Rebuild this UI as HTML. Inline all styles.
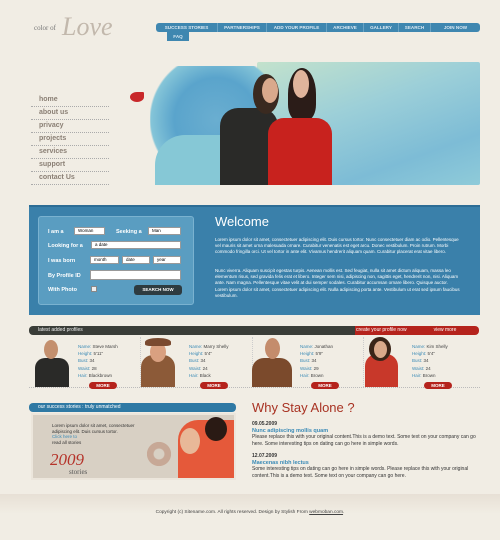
<!DOCTYPE html>
<html><head><meta charset="utf-8"><style>
*{margin:0;padding:0;box-sizing:border-box}
body{width:500px;height:540px;background:#f1ede4;font-family:"Liberation Sans",sans-serif;position:relative;overflow:hidden}
.a{position:absolute}
.nav{left:156px;top:23px;width:324px;height:9px;background:#3f87b0;border-radius:3px;color:#dbe9f2;font-size:4.6px;font-weight:bold;line-height:9px;display:flex;white-space:nowrap}
.nav span{border-right:1px solid #6aa3c4;text-align:center}
.menu div{height:13px;border-bottom:1px dotted #aaa;color:#8a7f74;font-size:7px;font-weight:bold;padding-left:8px;line-height:11px;width:78px}
.lbl{color:#fff;font-size:5.5px;font-weight:bold}
.sel{background:#fff;border:1px solid #999;height:8px;font-size:4.5px;padding-left:3px;line-height:6px;position:absolute}
.pr{font-size:4.5px;color:#444;line-height:7.2px}
.pr b{color:#3a8ab6;font-weight:normal}
.more{background:#b5231c;color:#fff;font-size:4.5px;font-weight:bold;width:28px;height:7px;border-radius:4px;text-align:center;line-height:7px}
.txt{font-size:4.5px;color:#fff;line-height:6.2px}
</style></head><body>
<div class="a" style="left:34px;top:24px;font-size:7px;color:#777;font-family:'Liberation Serif',serif">color of</div>
<div class="a" style="left:62px;top:12px;font-size:26px;color:#c2b8ac;font-family:'Liberation Serif',serif;font-style:italic">Love</div>
<div class="a nav"><span style="width:62px">SUCCESS STORIES</span><span style="width:49px">PARTNERSHIPS</span><span style="width:60px">ADD YOUR PROFILE</span><span style="width:37px">ARCHIEVE</span><span style="width:35px">GALLERY</span><span style="width:32px">SEARCH</span><span style="border:0;width:49px">JOIN NOW</span></div>
<div class="a" style="left:167px;top:32px;width:22px;height:9px;background:#3f87b0;color:#dbe9f2;font-size:4.6px;font-weight:bold;line-height:9px;text-align:center">FAQ</div>
<div class="a menu" style="left:31px;top:94px">
<div>home</div><div>about us</div><div>privacy</div><div>projects</div><div>services</div><div>support</div><div>contact Us</div></div>
<!-- hero -->
<div class="a" style="left:257px;top:62px;width:223px;height:123px;background:linear-gradient(160deg,#c3e2cc 0%,#9ccfd8 40%,#7dbcd6 75%,#8fcbd9 100%);border-radius:2px"></div>
<div class="a" style="left:150px;top:66px;width:120px;height:119px;background:radial-gradient(circle at 55% 45%,#6aaed0 0%,#5aa4cc 45%,#85c5d8 70%,rgba(140,200,215,0) 72%)"></div>
<div class="a" style="left:155px;top:135px;width:110px;height:50px;background:#86c8d6;border-radius:30px 0 0 0"></div>
<div class="a" style="left:130px;top:92px;width:14px;height:10px;background:#c8282a;border-radius:50% 10% 50% 50%"></div>
<div class="a" style="left:220px;top:108px;width:58px;height:77px;background:#2a2a28;border-radius:18px 18px 0 0"></div>
<div class="a" style="left:253px;top:74px;width:26px;height:40px;background:#3a2a20;border-radius:50%"></div>
<div class="a" style="left:262px;top:78px;width:16px;height:25px;background:#d9a98c;border-radius:50%"></div>
<div class="a" style="left:288px;top:68px;width:28px;height:52px;background:#2b1c18;border-radius:50% 50% 30% 30%"></div>
<div class="a" style="left:293px;top:70px;width:16px;height:28px;background:#e0b49c;border-radius:50%"></div>
<div class="a" style="left:268px;top:118px;width:64px;height:67px;background:#c8221e;border-radius:16px 16px 0 0"></div>
<!-- search band -->
<div class="a" style="left:29px;top:205px;width:451px;height:110px;background:#3a80aa;border-top:2px solid #2d6d95"></div>
<div class="a" style="left:38px;top:216px;width:156px;height:89px;background:#5a9dc1;border:1px solid #7ab2d0;border-radius:3px"></div>
<div class="a lbl" style="left:48px;top:229px">I am a</div>
<div class="sel" style="left:74px;top:227px;width:31px">Woman</div>
<div class="a lbl" style="left:116px;top:229px">Seeking a</div>
<div class="sel" style="left:148px;top:227px;width:33px">Man</div>
<div class="a lbl" style="left:48px;top:243px">Looking for a</div>
<div class="sel" style="left:91px;top:241px;width:90px">a date</div>
<div class="a lbl" style="left:48px;top:258px">I was born</div>
<div class="sel" style="left:90px;top:256px;width:29px">month</div>
<div class="sel" style="left:122px;top:256px;width:28px">date</div>
<div class="sel" style="left:153px;top:256px;width:28px">year</div>
<div class="a lbl" style="left:48px;top:273px">By Profile ID</div>
<div class="sel" style="left:90px;top:270px;width:91px;height:10px"></div>
<div class="a lbl" style="left:48px;top:287px">With Photo</div>
<div class="a" style="left:91px;top:286px;width:6px;height:6px;background:#eee;border:1px solid #888"></div>
<div class="a" style="left:134px;top:285px;width:48px;height:10px;background:#2e3b40;border-radius:3px;color:#fff;font-size:4.5px;font-weight:bold;line-height:10px;text-align:center">SEARCH NOW</div>
<div class="a" style="left:215px;top:214px;color:#fff;font-size:13px">Welcome</div>
<div class="a txt" style="left:215px;top:237px;width:245px">Lorem ipsum dolor sit amet, consectetuer adipiscing elit. Duis cursus tortor. Nunc consectetuer diam ac odio. Pellentesque vel mauris sit amet urna malesuada ornare. Curabitur venenatis est eget arcu. Donec vestibulum. Proin rutrum. Morbi commodo fringilla orci. Ut vel tortor in ante elit. Vivamus hendrerit aliquam quam. Curabitur placerat erat vitae libero.</div>
<div class="a txt" style="left:215px;top:268px;width:245px">Nunc viverra. Aliquam suscipit egestas turpis. Aenean mollis est. Sed feugiat, nulla sit amet dictum aliquam, massa leo elementum risus, sed gravida felis erat et libero. Integer sem nisi, adipiscing non, sagittis eget, hendrerit non, nisi. Aliquam ante. Nam magna. Pellentesque vitae velit at dui semper sodales. Curabitur accumsan ornare libero. Quisque auctor. Lorem ipsum dolor sit amet, consectetuer adipiscing elit. Nulla adipiscing porta ante. Vestibulum ut erat sed ipsum faucibus vestibulum.</div>
<!-- profiles -->
<div class="a" style="left:29px;top:326px;width:326px;height:9px;background:#3a3d38;border-radius:4px 0 0 4px;color:#eee;font-size:5px;line-height:9px;padding-left:9px">latest added profiles</div>
<div class="a" style="left:355px;top:326px;width:124px;height:9px;background:#b5231c;border-radius:0 4px 4px 0;color:#fff;font-size:5px;line-height:9px;padding-left:1px">create your profile now<span style="margin-left:27px">view more</span></div>
<div class="a" style="left:29px;top:387px;width:451px;border-top:1px dotted #bbb"></div>
<div class="a" style="left:140px;top:337px;height:50px;border-left:1px dotted #ccc"></div>
<div class="a" style="left:252px;top:337px;height:50px;border-left:1px dotted #ccc"></div>
<div class="a" style="left:363px;top:337px;height:50px;border-left:1px dotted #ccc"></div>
<div class="a" style="left:35px;top:358px;width:34px;height:29px;background:#2a2a28;border-radius:10px 10px 0 0"></div><div class="a" style="left:44px;top:340px;width:14px;height:19px;background:#c4906e;border-radius:50%"></div>
<div class="a" style="left:141px;top:355px;width:34px;height:32px;background:#8c5a38;border-radius:12px 12px 0 0"></div><div class="a" style="left:150px;top:342px;width:16px;height:20px;background:#d9a080;border-radius:50%"></div><div class="a" style="left:145px;top:338px;width:26px;height:8px;background:#7a4a30;border-radius:50% 50% 20% 20%"></div>
<div class="a" style="left:252px;top:358px;width:40px;height:29px;background:#7b4a2c;border-radius:12px 12px 0 0"></div><div class="a" style="left:265px;top:338px;width:15px;height:21px;background:#c48c6c;border-radius:50%"></div>
<div class="a" style="left:365px;top:354px;width:33px;height:33px;background:#c8382a;border-radius:12px 12px 0 0"></div><div class="a" style="left:369px;top:337px;width:22px;height:24px;background:#3a2418;border-radius:50%"></div><div class="a" style="left:374px;top:341px;width:13px;height:17px;background:#d9a88a;border-radius:50%"></div>
<div class="a pr" style="left:78px;top:343px"><b>Name:</b> Steve Marsh<br><b>Height:</b> 5'11"<br><b>Bust:</b> 34<br><b>Waist:</b> 28<br><b>Hair:</b> Blackbrown</div>
<div class="a pr" style="left:189px;top:343px"><b>Name:</b> Marry Shelly<br><b>Height:</b> 5'4"<br><b>Bust:</b> 34<br><b>Waist:</b> 24<br><b>Hair:</b> Black</div>
<div class="a pr" style="left:300px;top:343px"><b>Name:</b> Jonathan<br><b>Height:</b> 5'9"<br><b>Bust:</b> 34<br><b>Waist:</b> 29<br><b>Hair:</b> Brown</div>
<div class="a pr" style="left:412px;top:343px"><b>Name:</b> Kim Shelly<br><b>Height:</b> 5'4"<br><b>Bust:</b> 34<br><b>Waist:</b> 24<br><b>Hair:</b> Brown</div>
<div class="a more" style="left:89px;top:382px">MORE</div>
<div class="a more" style="left:200px;top:382px">MORE</div>
<div class="a more" style="left:311px;top:382px">MORE</div>
<div class="a more" style="left:424px;top:382px">MORE</div>
<!-- success -->
<div class="a" style="left:29px;top:403px;width:207px;height:9px;background:#2f79a4;border-radius:4px;color:#fff;font-size:5px;line-height:9px;padding-left:9px">our success stories : truly unmatched</div>
<div class="a" style="left:31px;top:413px;width:205px;height:67px;background:#d8d0c4;border:2px solid #ece6dc"></div>
<div class="a" style="left:178px;top:420px;width:56px;height:58px;background:#e5593a;border-radius:20px 0 0 0"></div>
<div class="a" style="left:180px;top:428px;width:20px;height:26px;background:#e8b898;border-radius:50%"></div>
<div class="a" style="left:205px;top:417px;width:22px;height:24px;background:#2a1a14;border-radius:50%"></div>
<div class="a" style="left:145px;top:440px;width:28px;height:28px;border-radius:50%;background:radial-gradient(circle,#d8d0c4 25%,#c7a896 30%,#c7a896 60%,rgba(0,0,0,0) 62%)"></div>
<div class="a" style="left:52px;top:423px;font-size:4.5px;color:#333;line-height:5.5px">Lorem ipsum dolor sit amet, consectetuer<br>adipiscing elit. Duis cursus tortor.<br><span style="color:#3a8ab6">Click here to</span><br>read all stories</div>
<div class="a" style="left:50px;top:450px;font-size:17px;color:#b5332a;font-family:'Liberation Serif',serif;font-style:italic">2009</div>
<div class="a" style="left:69px;top:468px;font-size:7px;color:#555;font-family:'Liberation Serif',serif">stories</div>
<div class="a" style="left:252px;top:400px;font-size:13px;color:#a83222">Why Stay Alone ?</div>
<div class="a" style="left:252px;top:421px;font-size:5px;color:#333;line-height:6.6px;width:225px"><b>09.05.2009</b><br><b style="color:#3a8ab6;font-size:5.5px">Nunc adipiscing mollis quam</b><br>Please replace this with your original content.This is a demo text. Some text on your company can go here. Some interesting tips on dating can go here in simple words.</div>
<div class="a" style="left:252px;top:453px;font-size:5px;color:#333;line-height:6.6px;width:225px"><b>12.07.2009</b><br><b style="color:#3a8ab6;font-size:5.5px">Maecenas nibh lectus</b><br>Some interesting tips on dating can go here in simple words. Please replace this with your original content.This is a demo text. Some text on your company can go here.</div>
<div class="a" style="left:0;top:494px;width:500px;height:20px;background:linear-gradient(#e7e0d5,#f1ede4)"></div>
<div class="a" style="left:0;top:510px;width:500px;text-align:center;font-size:4.8px;color:#444">Copyright (c) Sitename.com. All rights reserved. Design by Stylish From <u>webmoban.com</u>.</div>
</body></html>
